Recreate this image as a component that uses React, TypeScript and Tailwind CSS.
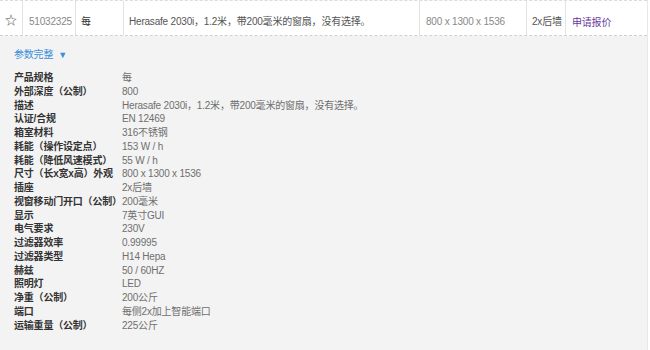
import React from 'react';

const specs: [string, string][] = [
  ['产品规格', '每'],
  ['外部深度（公制）', '800'],
  ['描述', 'Herasafe 2030i，1.2米，带200毫米的窗扇，没有选择。'],
  ['认证/合规', 'EN 12469'],
  ['箱室材料', '316不锈钢'],
  ['耗能（操作设定点）', '153 W / h'],
  ['耗能（降低风速模式）', '55 W / h'],
  ['尺寸（长x宽x高）外观', '800 x 1300 x 1536'],
  ['插座', '2x后墙'],
  ['视窗移动门开口（公制）', '200毫米'],
  ['显示', '7英寸GUI'],
  ['电气要求', '230V'],
  ['过滤器效率', '0.99995'],
  ['过滤器类型', 'H14 Hepa'],
  ['赫兹', '50 / 60HZ'],
  ['照明灯', 'LED'],
  ['净重（公制）', '200公斤'],
  ['端口', '每侧2x加上智能端口'],
  ['运输重量（公制）', '225公斤'],
];

export default function App() {
  return (
    <div
      className="w-[650px] h-[350px] overflow-hidden bg-white text-[10px] tracking-[-0.2px]"
      style={{ fontFamily: '"Liberation Sans", "Noto Sans CJK SC", sans-serif' }}
    >
      <div className="w-[648px] h-full border-r border-[#e8e8e8] bg-[#f3f3f3]">
        {/* product row */}
        <div className="flex h-[36px] whitespace-nowrap bg-white border-t border-[#dcdcdc] border-b border-dashed border-b-[#cfcfcf] text-[#666]">
          <div className="w-[22px] shrink-0 flex justify-center pt-[12px] text-[#555] text-[12px] leading-[16px]">☆</div>
          <div className="w-[53px] shrink-0 border-l border-[#e3e3e3] pl-[6px] pt-[13px] leading-[16px] text-[#888]">51032325</div>
          <div className="w-[48px] shrink-0 border-l border-[#e3e3e3] pl-[5px] pt-[13px] leading-[16px] text-[#333]">每</div>
          <div className="w-[296px] shrink-0 border-l border-[#e3e3e3] pl-[5px] pt-[13px] leading-[16px] text-[#555]">
            Herasafe 2030i，1.2米，带200毫米的窗扇，没有选择。
          </div>
          <div className="w-[107px] shrink-0 border-l border-[#e3e3e3] pl-[6px] pt-[13px] leading-[16px] text-[#888]">800 x 1300 x 1536</div>
          <div className="w-[39px] shrink-0 overflow-hidden border-l border-[#e3e3e3] pl-[5px] pt-[13px] leading-[16px] text-[#555]">2x后墙</div>
          <div className="flex-1 border-l border-[#e3e3e3] pl-[6px] pt-[14px] leading-[16px] text-[#6a3a9c]">申请报价</div>
        </div>

        {/* expanded specs */}
        <div className="pl-[14px] pt-[11px]">
          <div className="flex items-center gap-[5px] text-[#3b8fd9] leading-[16px]">
            <span>参数完整</span>
            <span className="text-[9px]">▼</span>
          </div>
          <div className="mt-[8px]">
            {specs.map(([k, v]) => (
              <div key={k} className="flex whitespace-nowrap leading-[13.75px]">
                <div className="w-[108px] shrink-0 font-bold text-[#333]">{k}</div>
                <div className="text-[#6f6f6f]">{v}</div>
              </div>
            ))}
          </div>
        </div>
      </div>
    </div>
  );
}
